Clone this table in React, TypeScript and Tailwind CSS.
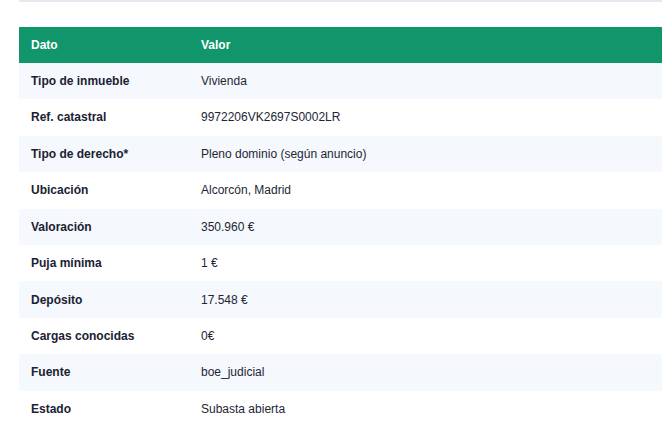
const rows: Array<{ label: string; value: string }> = [
  { label: 'Tipo de inmueble', value: 'Vivienda' },
  { label: 'Ref. catastral', value: '9972206VK2697S0002LR' },
  { label: 'Tipo de derecho*', value: 'Pleno dominio (según anuncio)' },
  { label: 'Ubicación', value: 'Alcorcón, Madrid' },
  { label: 'Valoración', value: '350.960 €' },
  { label: 'Puja mínima', value: '1 €' },
  { label: 'Depósito', value: '17.548 €' },
  { label: 'Cargas conocidas', value: '0€' },
  { label: 'Fuente', value: 'boe_judicial' },
  { label: 'Estado', value: 'Subasta abierta' },
];

export default function App() {
  return (
    <div
      className="w-[670px] h-[443px] bg-white overflow-hidden pl-[19px] pr-[8px]"
      style={{ fontFamily: '"Liberation Sans", Arial, sans-serif' }}
    >
      {/* borde inferior de la tarjeta anterior */}
      <div className="h-[1.5px] bg-[#e4e8ef]" />

      <table className="mt-[25.5px] w-full border-collapse text-[12px] leading-[14.4px]">
        <thead>
          <tr className="bg-[#10966a] text-white">
            <th className="w-[170px] text-left font-bold px-3 py-[10.7px]">Dato</th>
            <th className="text-left font-bold px-3 py-[10.7px]">Valor</th>
          </tr>
        </thead>
        <tbody>
          {rows.map((row, idx) => (
            <tr key={row.label} className={idx % 2 === 0 ? 'bg-[#f5f8fc]' : 'bg-white'}>
              <td className="px-3 pt-[11.2px] pb-[10.85px] font-bold text-[#1a2233]">{row.label}</td>
              <td className="px-3 pt-[11.2px] pb-[10.85px] text-[#1e2636]">{row.value}</td>
            </tr>
          ))}
        </tbody>
      </table>
    </div>
  );
}
